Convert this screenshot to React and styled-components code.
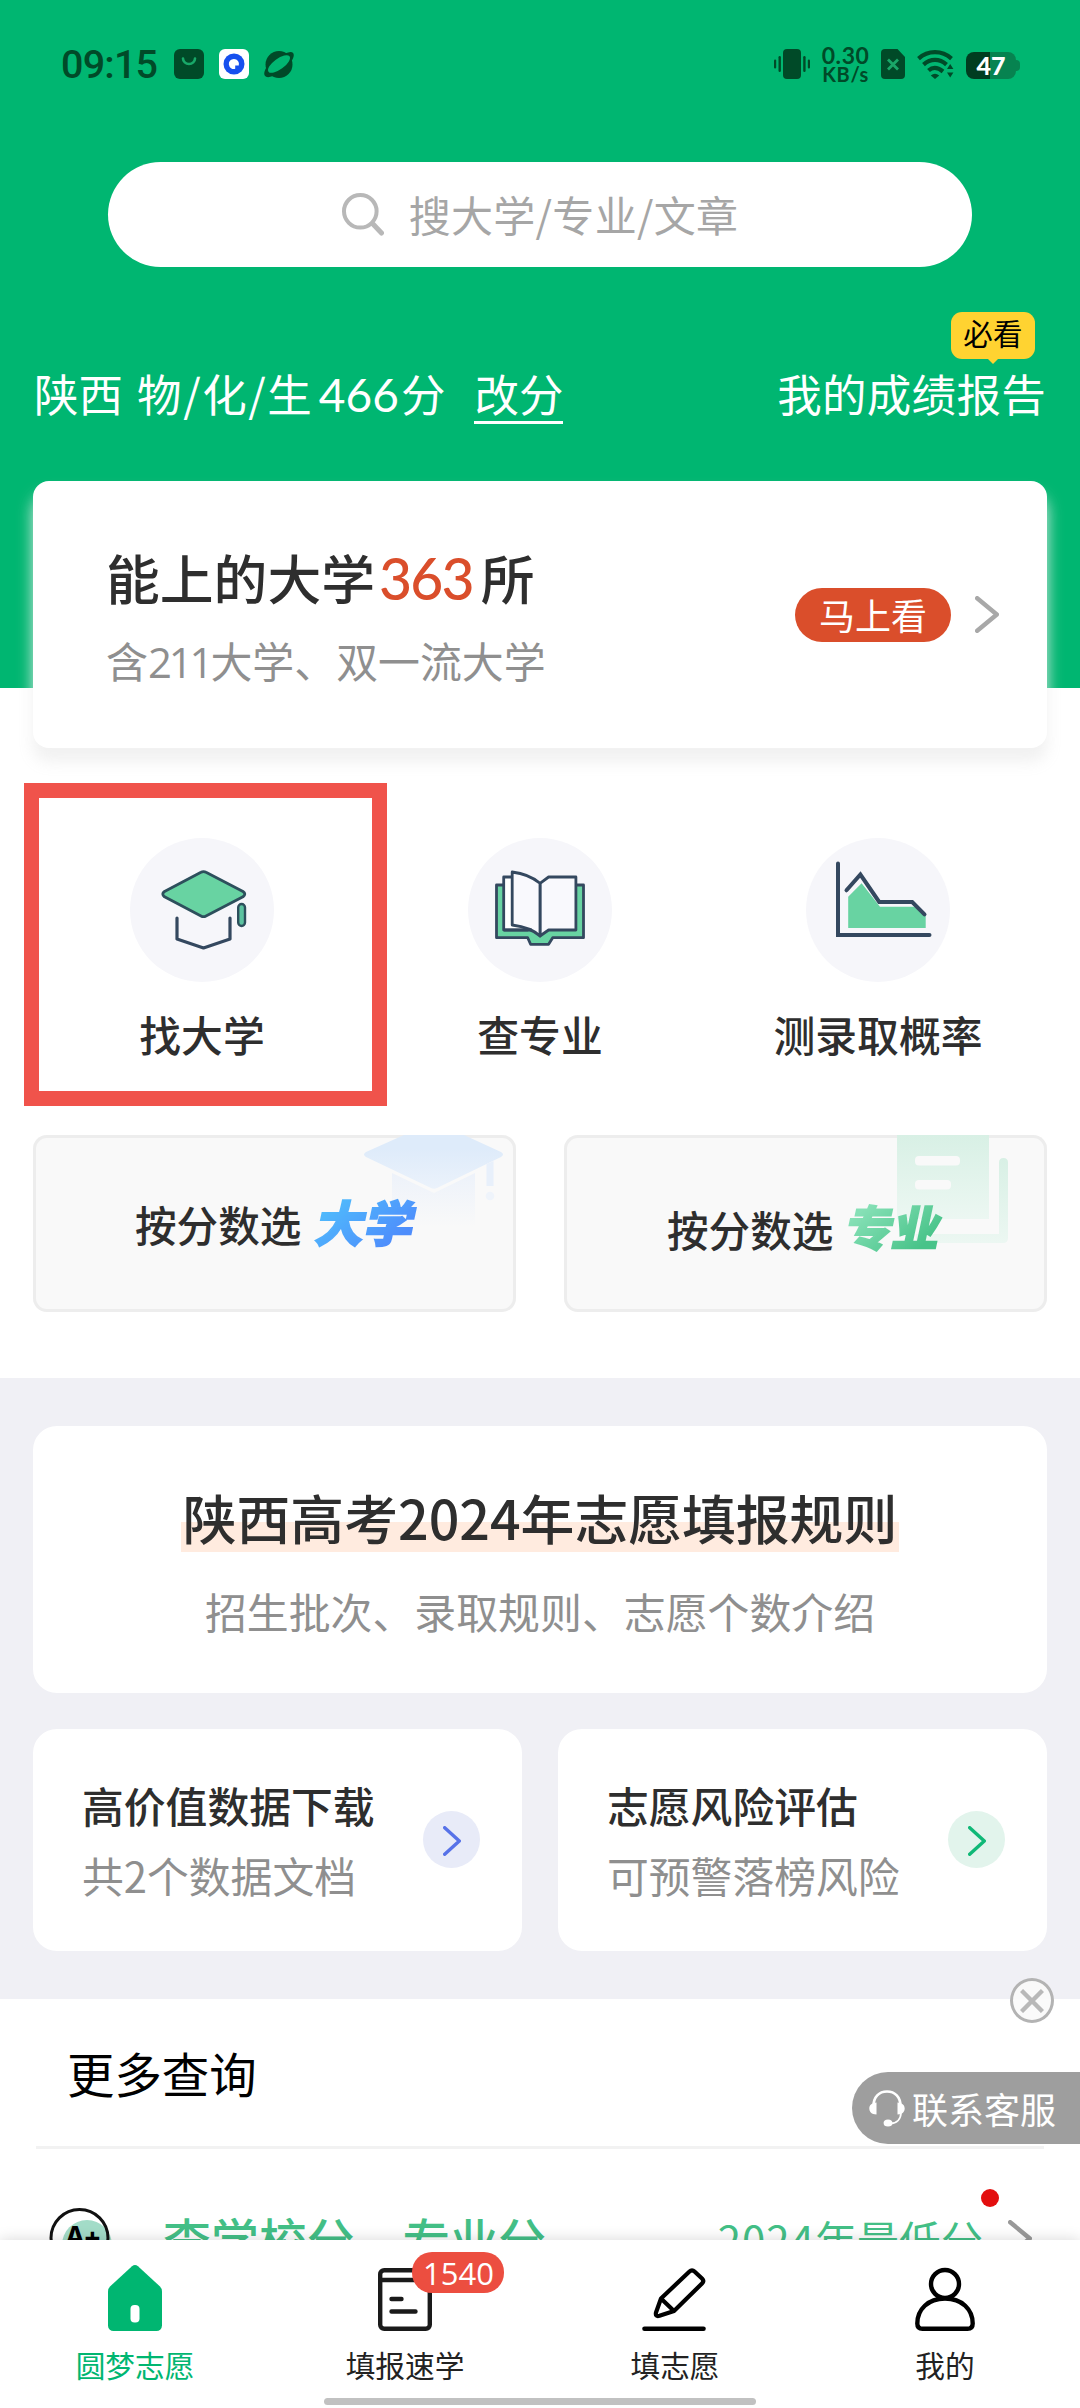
import React from "react";
import styled, { createGlobalStyle } from "styled-components";

const GREEN = "#00b671";
const DARK = "#004a28";
const INK = "#2e2e2e";
const MUTED = "#8f8f8f";

const GlobalStyle = createGlobalStyle`
  * { box-sizing: border-box; }
  body {
    margin: 0;
    background: #fff;
    font-family: "Noto Sans CJK SC", "Noto Sans", sans-serif;
    -webkit-font-smoothing: antialiased;
  }
  svg { display: block; flex: none; }
`;

const Screen = styled.div`
  position: relative;
  width: 1080px;
  height: 2408px;
  overflow: hidden;
  background: #fff;
  white-space: nowrap;
`;

const Header = styled.header`
  height: 688px;
  background: ${GREEN};
`;

const StatusBar = styled.div`
  display: flex;
  align-items: center;
  justify-content: space-between;
  height: 128px;
  padding: 0 64px 0 61px;
  color: ${DARK};
`;

const StatusGroup = styled.div`
  display: flex;
  align-items: center;
  gap: ${(p) => p.$gap}px;
`;

const Clock = styled.span`
  width: 98px;
  padding-top: 1px;
  font: 500 39.5px/50px Roboto, sans-serif;
  letter-spacing: -0.8px;
`;

const NetSpeed = styled.div`
  display: flex;
  flex-direction: column;
  align-items: center;
  width: 48px;
  padding-top: 2px;
  font-family: Lato, sans-serif;
  font-weight: 700;
  font-size: 23px;
  line-height: 19px;
  letter-spacing: 0.6px;
`;

const SpeedUnit = styled.span`
  font-size: 20px;
`;

const Battery = styled.div`
  display: flex;
  align-items: center;
  justify-content: center;
  position: relative;
  width: 50px;
  height: 27px;
  margin-top: 3px;
  border-radius: 8px;
  background: linear-gradient(90deg, #003d20 48%, #078350 48%);
  color: #fff;
  font: 900 25px/27px Lato, sans-serif;

  &::after {
    content: "";
    position: absolute;
    right: -4px;
    top: 8px;
    width: 4px;
    height: 11px;
    border-radius: 0 4px 4px 0;
    background: #078350;
  }
`;

const SearchBar = styled.div`
  display: flex;
  align-items: center;
  justify-content: center;
  gap: 25px;
  height: 105px;
  margin: 34px 108px 0;
  border-radius: 53px;
  background: #fff;
  color: #a6a6a6;
  font-size: 42px;
  line-height: 60px;
`;

const SearchHint = styled.span`
  padding-bottom: 1px;
  letter-spacing: 0.3px;
`;

const InfoRow = styled.div`
  display: flex;
  justify-content: space-between;
  height: 61px;
  margin-top: 96px;
  padding: 0 34px 0 34px;
  color: #fff;
  font-size: 44.5px;
  line-height: 60px;
`;

const Candidate = styled.div`
  display: flex;
`;

const Subjects = styled.span`
  margin-left: 14px;
`;

const Slash = styled.span`
  margin: 0 1.6px;
`;

const Score = styled.span`
  margin-left: 7px;
`;

const ScoreDigits = styled.span`
  margin-right: 2px;
  font-family: Lato, sans-serif;
  font-size: 46px;
  line-height: 1;
`;

const EditLink = styled.span`
  height: 61px;
  margin-left: 29px;
  border-bottom: 3px solid #fff;
`;

const ReportLink = styled.div`
  position: relative;
  letter-spacing: 0.3px;
`;

const MustRead = styled.span`
  position: absolute;
  right: 11px;
  top: -51px;
  width: 84px;
  height: 47px;
  border-radius: 11px;
  background: #ffd331;
  color: #000;
  text-align: center;
  font-size: 29.5px;
  line-height: 40px;

  &::after {
    content: "";
    position: absolute;
    left: 37px;
    top: 47px;
    border: 5px solid transparent;
    border-top-color: #ffd331;
    border-bottom: 0;
  }
`;

const EligibleCard = styled.section`
  position: relative;
  display: flex;
  align-items: center;
  height: 267px;
  margin: -207px 33px 0;
  padding: 0 48px 0 73px;
  border-radius: 16px;
  background: #fff;
  box-shadow: 0 14px 15px rgba(240, 240, 240, 0.9);
`;

const EligibleText = styled.div`
  flex: 1;
`;

const EligibleTitle = styled.div`
  display: flex;
  align-items: baseline;
  height: 78px;
  color: ${INK};
  font-weight: 500;
  font-size: 53.8px;
  line-height: 74px;
`;

const Count = styled.span`
  margin: 0 8px 0 4px;
  color: #da4e2b;
  font-family: Lato, sans-serif;
  font-weight: 500;
  font-size: 57px;
  line-height: 1;
  letter-spacing: -1.8px;
`;

const EligibleNote = styled.div`
  margin-top: 12px;
  color: ${MUTED};
  font-size: 41.9px;
  line-height: 60px;
`;

const Tight = styled.span`
  font-family: "Open Sans", sans-serif;
  line-height: 1;
  letter-spacing: -3.1px;
`;

const GoButton = styled.span`
  width: 156px;
  height: 54px;
  margin-right: 24px;
  border-radius: 27px;
  background: #da4e2b;
  color: #fff;
  text-align: center;
  font-size: 36px;
  line-height: 52px;
`;

const Shortcuts = styled.nav`
  display: grid;
  grid-template-columns: repeat(3, 1fr);
  margin: 90px 33px 0;
`;

const Shortcut = styled.div`
  position: relative;
  display: flex;
  flex-direction: column;
  align-items: center;
  gap: 22px;
  color: ${INK};
  font-weight: 500;
  font-size: 41.8px;
  line-height: 60px;
`;

const ShortcutIcon = styled.div`
  width: 144px;
  height: 144px;
  border-radius: 50%;
  background: #f6f6fa;
`;

const Highlight = styled.div`
  position: absolute;
  left: -9px;
  top: -55px;
  width: 363px;
  height: 323px;
  border: 15px solid #f0534b;
`;

const Pickers = styled.div`
  display: grid;
  grid-template-columns: 1fr 1fr;
  gap: 48px;
  margin: 71px 33px 0;
`;

const Picker = styled.div`
  position: relative;
  display: flex;
  align-items: center;
  gap: 14px;
  height: 177px;
  padding: ${(p) => p.$pad};
  border-radius: 14px;
  background: #f9f9f9;
  box-shadow: inset 0 0 0 3px #ededed;
  overflow: hidden;
  color: ${INK};
  font-weight: 500;
  font-size: 41.6px;
  line-height: 60px;
`;

const PickerArt = styled.svg`
  position: absolute;
  left: 0;
  top: 0;
`;

const PickerLabel = styled.span`
  position: relative;
`;

const PickerWord = styled.span`
  position: relative;
  padding: 0 8px;
  margin: -5px 0 0 ${(p) => p.$shift}px;
  font-weight: 900;
  font-size: ${(p) => p.$size}px;
  line-height: 60px;
  transform: skewX(-12deg);
  background: linear-gradient(135deg, ${(p) => p.$from} 20%, ${(p) => p.$to} 80%);
  -webkit-background-clip: text;
  background-clip: text;
  -webkit-text-stroke: 1.6px transparent;
  color: transparent;
`;

const Guides = styled.section`
  display: grid;
  grid-template-columns: 1fr 1fr;
  gap: 36px;
  height: 621px;
  margin-top: 66px;
  padding: 48px 33px;
  background: #f0f0f5;
  align-content: start;
`;

const RulesCard = styled.div`
  grid-column: 1 / -1;
  display: flex;
  flex-direction: column;
  align-items: center;
  height: 267px;
  padding-top: 52px;
  border-radius: 24px;
  background: #fff;
`;

const RulesTitle = styled.div`
  height: 74px;
  padding: 0 2px;
  background: linear-gradient(#ffebdf, #ffebdf) 0 100% / 100% 30px no-repeat;
  color: ${INK};
  font-weight: 500;
  font-size: 53.8px;
  line-height: 77px;
`;

const RulesNote = styled.div`
  margin-top: 28px;
  color: ${MUTED};
  font-size: 41.9px;
  line-height: 61px;
`;

const GuideCard = styled.div`
  display: flex;
  align-items: center;
  justify-content: space-between;
  height: 222px;
  padding: 0 42px 0 49px;
  border-radius: 24px;
  background: #fff;
`;

const GuideTitle = styled.div`
  color: ${INK};
  font-weight: 500;
  font-size: 41.8px;
  line-height: 69px;
`;

const GuideNote = styled.div`
  color: ${MUTED};
  font-size: 41.8px;
  line-height: 70px;
`;

const RoundArrow = styled.div`
  display: flex;
  align-items: center;
  justify-content: center;
  width: 57px;
  height: 57px;
  border-radius: 50%;
  background: ${(p) => p.$bg};
  padding-top: 3px;
  margin-bottom: 1px;
`;

const MoreTitle = styled.h2`
  height: 147px;
  margin: 0;
  padding-left: 67px;
  color: #000;
  font-weight: 400;
  font-size: 47.4px;
  line-height: 147px;
`;

const Divider = styled.div`
  height: 3px;
  margin: 0 36px;
  background: #f2f2f2;
`;

const QueryRow = styled.div`
  display: flex;
  align-items: center;
  height: 178px;
  padding: 0 48px 0 49px;
  color: #43bf86;
`;

const QueryTitle = styled.span`
  flex: 1;
  margin-left: 50px;
  font-weight: 500;
  font-size: 47.9px;
  line-height: 60px;
`;

const QueryHint = styled.span`
  position: relative;
  margin-right: 25px;
  padding-top: 1px;
  font-size: 42px;
  line-height: 60px;
`;

const YearDigits = styled.span`
  letter-spacing: 1px;
`;

const RedDot = styled.i`
  position: absolute;
  right: -16px;
  top: -19px;
  width: 18px;
  height: 18px;
  border-radius: 50%;
  background: #e30f0f;
`;

const GradeIcon = styled.div`
  display: flex;
  position: relative;
  width: 64px;
  height: 60px;
`;

const GradeMark = styled.span`
  position: absolute;
  left: 16px;
  top: 9px;
  color: #000;
  font: 700 27px/40px Inter, sans-serif;
  letter-spacing: -1px;
`;

const CloseButton = styled.button`
  position: absolute;
  left: 1010px;
  top: 1978px;
  display: flex;
  align-items: center;
  justify-content: center;
  width: 44px;
  height: 45px;
  padding: 0;
  border: 3px solid #b3b3b3;
  border-radius: 50%;
  background: rgba(250, 250, 250, 0.9);
`;

const Support = styled.div`
  position: absolute;
  right: 0;
  top: 2072px;
  display: flex;
  align-items: center;
  gap: 7px;
  width: 228px;
  height: 72px;
  padding-left: 17px;
  border-radius: 36px 0 0 36px;
  background: #9e9e9e;
  color: #fff;
  font-size: 36px;
  line-height: 70px;
`;

const SupportText = styled.span`
  padding-bottom: 1px;
`;

const TabBar = styled.nav`
  position: absolute;
  left: 0;
  right: 0;
  bottom: 0;
  display: grid;
  grid-template-columns: repeat(4, 1fr);
  height: 168px;
  padding-top: 25px;
  background: #fff;
  box-shadow: 0 0 14px rgba(0, 0, 0, 0.16);
`;

const Tab = styled.div`
  position: relative;
  display: flex;
  flex-direction: column;
  align-items: center;
  gap: 14px;
  color: ${(p) => (p.$active ? GREEN : "#222")};
  font-size: 29.7px;
  line-height: 40px;
`;

const TabBadge = styled.span`
  position: absolute;
  left: 142px;
  top: -13px;
  width: 92px;
  height: 41px;
  padding-left: 1px;
  border-radius: 20px;
  background: #ec4e40;
  color: #fff;
  text-align: center;
  font: 400 31px/42px "Open Sans", sans-serif;
`;

const HomeIndicator = styled.div`
  position: absolute;
  left: 324px;
  bottom: 3px;
  width: 432px;
  height: 7px;
  border-radius: 4px;
  background: #c1c1c1;
`;

function Chevron({ w, h, color, stroke }) {
  const s = stroke / 2;
  return (
    <svg width={w} height={h} viewBox={`0 0 ${w} ${h}`} fill="none">
      <path
        d={`M${s} ${s}L${w - s} ${h / 2}L${s} ${h - s}`}
        stroke={color}
        strokeWidth={stroke}
        strokeLinecap="round"
        strokeLinejoin="round"
      />
    </svg>
  );
}

function BagIcon() {
  return (
    <svg width="30" height="30" viewBox="0 0 30 30">
      <rect width="30" height="30" rx="6" fill={DARK} />
      <path d="M9 9.5a6 5.5 0 0 0 12 0" fill="none" stroke="#18a869" strokeWidth="2.6" strokeLinecap="round" />
    </svg>
  );
}

function BrowserIcon() {
  return (
    <svg width="30" height="30" viewBox="0 0 30 30">
      <rect width="30" height="30" rx="6" fill="#fff" />
      <circle cx="15" cy="15" r="10.5" fill="#1650ee" />
      <path d="M15 10a5 5 0 1 0 1.2 9.8v-3.4h3.6A5 5 0 0 0 15 10z" fill="#fff" />
    </svg>
  );
}

function PlanetIcon() {
  return (
    <svg width="30" height="30" viewBox="0 0 30 30">
      <circle cx="15" cy="15.5" r="13.5" fill={DARK} />
      <path d="M21 4.500Q27.500 1.500 29.300 4.300Q31 7.500 26.500 13.500L20 9ZM9 27Q2.500 29.500 .7 26.500Q-1 23.500 3.500 16.500L10 21Z" fill={DARK} />
      <ellipse cx="15" cy="15" rx="13" ry="5.4" transform="rotate(-36 15 15)" fill={GREEN} />
    </svg>
  );
}

function VibrateIcon() {
  return (
    <svg width="36" height="30" viewBox="0 0 36 30" fill={DARK}>
      <rect x="9" width="18" height="30" rx="4" />
      <rect x="0" y="10.5" width="2.2" height="9" rx="1.1" />
      <rect x="4.5" y="7" width="2.4" height="16" rx="1.2" />
      <rect x="29.2" y="7" width="2.4" height="16" rx="1.2" />
      <rect x="33.8" y="10.5" width="2.2" height="9" rx="1.1" />
    </svg>
  );
}

function SimIcon() {
  return (
    <svg width="24" height="30" viewBox="0 0 24 30">
      <path d="M4 0h12.5L24 8v18a4 4 0 0 1-4 4H4a4 4 0 0 1-4-4V4a4 4 0 0 1 4-4z" fill={DARK} />
      <path d="M7 10.5l10 10M17 10.5l-10 10" stroke="#1aa668" strokeWidth="2.8" />
    </svg>
  );
}

function WifiIcon() {
  return (
    <svg width="37" height="30" viewBox="0 0 37 30">
      <g fill="none" stroke={DARK} strokeWidth="4.200">
        <path d="M1.5 9.6C11 1 25 1 34.5 9.6" />
        <path d="M6.5 15.6C13.5 9.4 22.5 9.4 29.5 15.6" />
        <path d="M11.5 21.5C15.5 18 20.5 18 26 22.5" />
      </g>
      <path d="M13.8 26.4q4.2-3.2 8.4 0L18 30z" fill={DARK} />
      <path d="M30 20l3.2-5 3.2 5zM30 23.4h6.4l-3.2 5z" fill={DARK} />
    </svg>
  );
}

function SearchIcon() {
  return (
    <svg width="42" height="43" viewBox="0 0 42 43" fill="none" stroke="#b8b8b8" strokeWidth="4" strokeLinecap="round">
      <circle cx="18.3" cy="18.3" r="16.3" />
      <path d="M30.5 30.5L39.5 40" strokeWidth="5" />
    </svg>
  );
}

const NAVY = "#34485f";
const MINT = "#68d3a2";

function CollegeIcon() {
  return (
    <svg width="144" height="144" viewBox="0 0 144 144" strokeLinecap="round" strokeLinejoin="round">
      <path
        d="M71 34.3Q73.5 32.8 76 34.3L113 53.5Q116.6 56 113 58.8L76 78Q73.5 79.4 71 78L34.5 58.8Q31 56 34.5 53.5Z"
        fill={MINT}
        stroke="#2d4f5c"
        strokeWidth="2.8"
      />
      <path d="M47 80V101L73.5 110L100 101V80" fill="none" stroke={NAVY} strokeWidth="3.2" />
      <rect x="108.2" y="66" width="6.8" height="22" rx="3.4" fill="#5cc3a0" stroke="#2d4f5c" strokeWidth="2.4" />
    </svg>
  );
}

function BookIcon() {
  return (
    <svg width="144" height="144" viewBox="0 0 144 144" stroke={NAVY} strokeWidth="2.8" strokeLinejoin="round">
      <path d="M28.5 47H115.5V99.7H84.7L80.6 106.3H62.6L59.7 99.7H28.5Z" fill={MINT} />
      <path d="M35.7 39H60V92H35.7Z" fill="#fff" />
      <path d="M72 45.3L80.6 39H107.9V92H80.6L72 98Z" fill="#f9f9fd" />
      <path d="M44.2 34Q61 36 72 45.3V98Q63 89.5 44.2 87Z" fill="#f9f9fd" />
      <path d="M36 92H64" fill="none" />
    </svg>
  );
}

function ChartIcon() {
  return (
    <svg width="144" height="144" viewBox="0 0 144 144" strokeLinecap="round">
      <path d="M42.2 58.7L55.6 45.3L74 68.7H108.3L119.7 78V90H42.2Z" fill={MINT} />
      <path d="M32 25.5V97H123.500" fill="none" stroke={NAVY} strokeWidth="4" />
      <path d="M40.5 52.3L54.4 36.5L73.2 64H106.2L118.5 76.3" fill="none" stroke={NAVY} strokeWidth="4" />
    </svg>
  );
}

function CapArt() {
  return (
    <PickerArt width="483" height="177" viewBox="0 0 483 177">
      <defs>
        <linearGradient id="capTop" x1="0" y1="0" x2="0" y2="1">
          <stop offset="0.25" stopColor="#deebfa" />
          <stop offset="1" stopColor="#ebf2fb" />
        </linearGradient>
        <linearGradient id="capBody" x1="0" y1="0" x2="0" y2="1">
          <stop offset="0" stopColor="#edf2fa" />
          <stop offset="1" stopColor="#f9f9f9" />
        </linearGradient>
      </defs>
      <path d="M359 38L401 58L442 38V92H359Z" fill="url(#capBody)" />
      <path
        d="M333 17L371 0H431L468 17Q472 19.5 468 22L404 53Q401 54.5 398 53L333 22Q329 19.5 333 17Z"
        fill="url(#capTop)"
      />
      <path d="M453.5 29L460.5 26V51H453.5Z" fill="#e8f0fb" />
      <circle cx="457" cy="61" r="4.3" fill="#eff4fb" />
    </PickerArt>
  );
}

function DocArt() {
  return (
    <PickerArt width="483" height="177" viewBox="0 0 483 177">
      <defs>
        <linearGradient id="docFill" x1="0" y1="0" x2="0" y2="1">
          <stop offset="0" stopColor="#d8f0e5" />
          <stop offset="1" stopColor="#ecf7f2" />
        </linearGradient>
      </defs>
      <path d="M333 0H425V84H333Z" fill="url(#docFill)" />
      <rect x="351" y="21" width="45" height="9.5" rx="4" fill="#f9f9f9" />
      <rect x="351" y="45" width="36" height="9.5" rx="4" fill="#f9f9f9" />
      <path d="M435 27.5Q435 23 439.5 23T444 27.5V103Q444 108 439 108H352V99H435Z" fill="url(#docFill)" />
    </PickerArt>
  );
}

function HeadsetIcon() {
  return (
    <svg width="36" height="37" viewBox="0 0 36 37">
      <path d="M4.5 16C4.5 7 10 1.5 18 1.5S31.5 7 31.5 16" fill="none" stroke="#fff" strokeWidth="2.6" />
      <path d="M7.5 12.5V24.5C2.5 24.5 .3 21.5 .3 18.5S2.5 12.8 7.5 12.5ZM28.5 12.5V24.5C33.5 24.5 35.7 21.5 35.7 18.5S33.5 12.8 28.5 12.5Z" fill="#fff" />
      <path d="M32 22C32 29 28 33.5 21 33.5" fill="none" stroke="#fff" strokeWidth="1.8" />
      <ellipse cx="19" cy="33" rx="4.4" ry="3.6" fill="#fff" />
    </svg>
  );
}

function HomeIcon() {
  return (
    <svg width="54" height="66" viewBox="0 0 54 66">
      <path d="M24 1.3Q27 -1.2 30 1.3L52 21.5Q54 23.5 54 26.5V60.5A5.5 5.5 0 0 1 48.5 66H5.5A5.5 5.5 0 0 1 0 60.5V26.5Q0 23.5 2 21.5Z" fill={GREEN} />
      <rect x="22.5" y="40" width="9" height="17.5" rx="4" fill="#fff" />
    </svg>
  );
}

function LessonIcon() {
  return (
    <svg width="54" height="66" viewBox="0 0 54 66" fill="none" stroke="#1a1a1a" strokeWidth="4.4" strokeLinecap="round">
      <rect x="2.2" y="5.2" width="49.6" height="58.6" rx="4" />
      <path d="M3 15H51" />
      <path d="M13.5 34H23.5M13.5 46.5H37.5" />
    </svg>
  );
}

function PencilIcon() {
  return (
    <svg width="66" height="66" viewBox="0 0 66 66" fill="none" stroke="#000" strokeWidth="4.2" strokeLinejoin="round" strokeLinecap="round">
      <path d="M19 33.5L47.5 6.5Q50 4 52.5 6.5L60 13.5Q62.5 16 60 18.5L32 46L17.5 50.8Q13 52 14 47.5Z" />
      <path d="M19.5 34L31.5 45.5" />
      <path d="M2.5 63.700H61.5" strokeWidth="4.6" />
    </svg>
  );
}

function PersonIcon() {
  return (
    <svg width="60" height="66" viewBox="0 0 60 66" fill="none" stroke="#000" strokeWidth="4.4">
      <circle cx="30" cy="19" r="14" />
      <path d="M30 33.5C13 33.5 2.3 44.5 2.3 58.5Q2.3 63.8 7.5 63.8H52.5Q57.7 63.8 57.7 58.5C57.7 44.5 47 33.5 30 33.5Z" />
    </svg>
  );
}

const shortcuts = [
  { label: "找大学", Icon: CollegeIcon, marked: true },
  { label: "查专业", Icon: BookIcon },
  { label: "测录取概率", Icon: ChartIcon },
];

const guides = [
  { title: "高价值数据下载", note: "共2个数据文档", color: "#5772e8", bg: "#e8ebf8" },
  { title: "志愿风险评估", note: "可预警落榜风险", color: "#10b877", bg: "#e2f4ec" },
];

const tabs = [
  { label: "圆梦志愿", Icon: HomeIcon, active: true },
  { label: "填报速学", Icon: LessonIcon, badge: "1540" },
  { label: "填志愿", Icon: PencilIcon },
  { label: "我的", Icon: PersonIcon },
];

export default function App() {
  return (
    <Screen>
      <GlobalStyle />
      <Header>
        <StatusBar>
          <StatusGroup $gap={15}>
            <Clock>09:15</Clock>
            <BagIcon />
            <BrowserIcon />
            <PlanetIcon />
          </StatusGroup>
          <StatusGroup $gap={11.8}>
            <VibrateIcon />
            <NetSpeed>
              0.30
              <SpeedUnit>KB/s</SpeedUnit>
            </NetSpeed>
            <SimIcon />
            <WifiIcon />
            <Battery>47</Battery>
          </StatusGroup>
        </StatusBar>
        <SearchBar>
          <SearchIcon />
          <SearchHint>搜大学/专业/文章</SearchHint>
        </SearchBar>
        <InfoRow>
          <Candidate>
            <span>陕西</span>
            <Subjects>
              物<Slash>/</Slash>化<Slash>/</Slash>生
            </Subjects>
            <Score>
              <ScoreDigits>466</ScoreDigits>分
            </Score>
            <EditLink>改分</EditLink>
          </Candidate>
          <ReportLink>
            我的成绩报告
            <MustRead>必看</MustRead>
          </ReportLink>
        </InfoRow>
      </Header>

      <EligibleCard>
        <EligibleText>
          <EligibleTitle>
            能上的大学<Count>363</Count>所
          </EligibleTitle>
          <EligibleNote>
            含<Tight>211</Tight>大学、双一流大学
          </EligibleNote>
        </EligibleText>
        <GoButton>马上看</GoButton>
        <Chevron w={24} h={37} color="#a8a8a8" stroke={4.4} />
      </EligibleCard>

      <Shortcuts>
        {shortcuts.map(({ label, Icon, marked }) => (
          <Shortcut key={label}>
            <ShortcutIcon>
              <Icon />
            </ShortcutIcon>
            {label}
            {marked && <Highlight />}
          </Shortcut>
        ))}
      </Shortcuts>

      <Pickers>
        <Picker $pad="0 0 0 102px">
          <CapArt />
          <PickerLabel>按分数选</PickerLabel>
          <PickerWord $size={49} $shift={-5.5} $from="#4fb8fc" $to="#4e8dfc">大学</PickerWord>
        </Picker>
        <Picker $pad="10px 0 0 103px">
          <DocArt />
          <PickerLabel>按分数选</PickerLabel>
          <PickerWord $size={47.5} $shift={-8} $from="#86e0b6" $to="#48c389">专业</PickerWord>
        </Picker>
      </Pickers>

      <Guides>
        <RulesCard>
          <RulesTitle>陕西高考2024年志愿填报规则</RulesTitle>
          <RulesNote>招生批次、录取规则、志愿个数介绍</RulesNote>
        </RulesCard>
        {guides.map((g) => (
          <GuideCard key={g.title}>
            <div>
              <GuideTitle>{g.title}</GuideTitle>
              <GuideNote>{g.note}</GuideNote>
            </div>
            <RoundArrow $bg={g.bg}>
              <Chevron w={18} h={30} color={g.color} stroke={3.4} />
            </RoundArrow>
          </GuideCard>
        ))}
      </Guides>

      <MoreTitle>更多查询</MoreTitle>
      <Divider />
      <QueryRow>
        <GradeIcon>
          <svg width="64" height="60" viewBox="0 0 64 60">
            <circle cx="38" cy="37" r="25" fill="#a3dcc8" />
            <circle cx="30.5" cy="30" r="28.5" fill="none" stroke="#111" strokeWidth="3" />
          </svg>
          <GradeMark>A+</GradeMark>
        </GradeIcon>
        <QueryTitle>查学校分、专业分</QueryTitle>
        <QueryHint>
          <YearDigits>2024</YearDigits>年最低分
          <RedDot />
        </QueryHint>
        <Chevron w={24} h={37} color="#999" stroke={4.4} />
      </QueryRow>

      <CloseButton aria-label="关闭">
        <svg width="24" height="24" viewBox="0 0 24 24">
          <path d="M1.5 1.5L22.5 22.5M22.5 1.5L1.5 22.5" stroke="#b8b8b8" strokeWidth="4.4" />
        </svg>
      </CloseButton>
      <Support>
        <HeadsetIcon />
        <SupportText>联系客服</SupportText>
      </Support>

      <TabBar>
        {tabs.map(({ label, Icon, active, badge }) => (
          <Tab key={label} $active={active}>
            <Icon />
            {label}
            {badge && <TabBadge>{badge}</TabBadge>}
          </Tab>
        ))}
        <HomeIndicator />
      </TabBar>
    </Screen>
  );
}
